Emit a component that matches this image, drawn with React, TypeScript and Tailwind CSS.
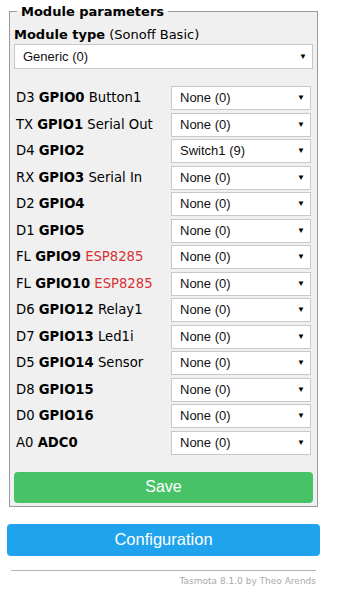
import React from 'react';

type Row = { pin: string; gpio: string; note?: string; red?: boolean; value: string };

const ROWS: Row[] = [
  { pin: 'D3', gpio: 'GPIO0', note: 'Button1', value: 'None (0)' },
  { pin: 'TX', gpio: 'GPIO1', note: 'Serial Out', value: 'None (0)' },
  { pin: 'D4', gpio: 'GPIO2', value: 'Switch1 (9)' },
  { pin: 'RX', gpio: 'GPIO3', note: 'Serial In', value: 'None (0)' },
  { pin: 'D2', gpio: 'GPIO4', value: 'None (0)' },
  { pin: 'D1', gpio: 'GPIO5', value: 'None (0)' },
  { pin: 'FL', gpio: 'GPIO9', note: 'ESP8285', red: true, value: 'None (0)' },
  { pin: 'FL', gpio: 'GPIO10', note: 'ESP8285', red: true, value: 'None (0)' },
  { pin: 'D6', gpio: 'GPIO12', note: 'Relay1', value: 'None (0)' },
  { pin: 'D7', gpio: 'GPIO13', note: 'Led1i', value: 'None (0)' },
  { pin: 'D5', gpio: 'GPIO14', note: 'Sensor', value: 'None (0)' },
  { pin: 'D8', gpio: 'GPIO15', value: 'None (0)' },
  { pin: 'D0', gpio: 'GPIO16', value: 'None (0)' },
  { pin: 'A0', gpio: 'ADC0', value: 'None (0)' },
];

const FakeSelect = ({ value, className = '' }: { value: string; className?: string }) => (
  <div
    className={`flex h-[24px] items-center justify-between border border-[#c8c8c8] bg-white pl-[8px] pr-[5px] font-['Liberation_Sans',Arial,sans-serif] text-[13px] text-[#111] ${className}`}
  >
    <span>{value}</span>
    <span className="text-[8px] leading-none text-black">▼</span>
  </div>
);

export default function App() {
  return (
    <div className="min-h-[599px] w-[337px] bg-white font-['DejaVu_Sans',Verdana,sans-serif] text-black">
      <div className="ml-[7px] w-[313px] pt-[4px]">
        <fieldset className="mx-[2px] border border-[#9a9a9a] bg-[#f0f0f0] px-[4px] pb-[3px]">
          <legend className="ml-[3px] px-[4px] text-[13px] font-bold leading-[15px]">Module parameters</legend>

          <div className="mt-[8px] text-[13px] leading-[16px]">
            <b>Module type</b> (Sonoff Basic)
          </div>
          <FakeSelect value="Generic (0)" className="mt-[1px] h-[25px]" />

          <div className="mt-[17px] flex flex-col gap-[2.5px]">
            {ROWS.map((row) => (
              <div key={row.gpio} className="flex items-center">
                <div className="w-[157px] pl-[2px] text-[13.2px] leading-[16px]">
                  {row.pin} <b>{row.gpio}</b>
                  {row.note && (
                    <span className={row.red ? 'text-[#d63034]' : ''}> {row.note}</span>
                  )}
                </div>
                <FakeSelect value={row.value} className="w-[140px]" />
              </div>
            ))}
          </div>

          <button className="mt-[17px] h-[31px] w-full rounded-[4px] bg-[#47c266] font-['Liberation_Sans',Arial,sans-serif] text-[16px] text-white">
            Save
          </button>
        </fieldset>

        <button className="mt-[17px] h-[32px] w-full rounded-[4px] bg-[#1fa3ec] font-['Liberation_Sans',Arial,sans-serif] text-[16.5px] text-white">
          Configuration
        </button>

        <div className="mt-[14px] px-[4px] text-right">
          <hr className="border-t border-[#b4b4b4]" />
          <div className="mt-[4px] text-[9px] text-[#aaa]">Tasmota 8.1.0 by Theo Arends</div>
        </div>
      </div>
    </div>
  );
}
